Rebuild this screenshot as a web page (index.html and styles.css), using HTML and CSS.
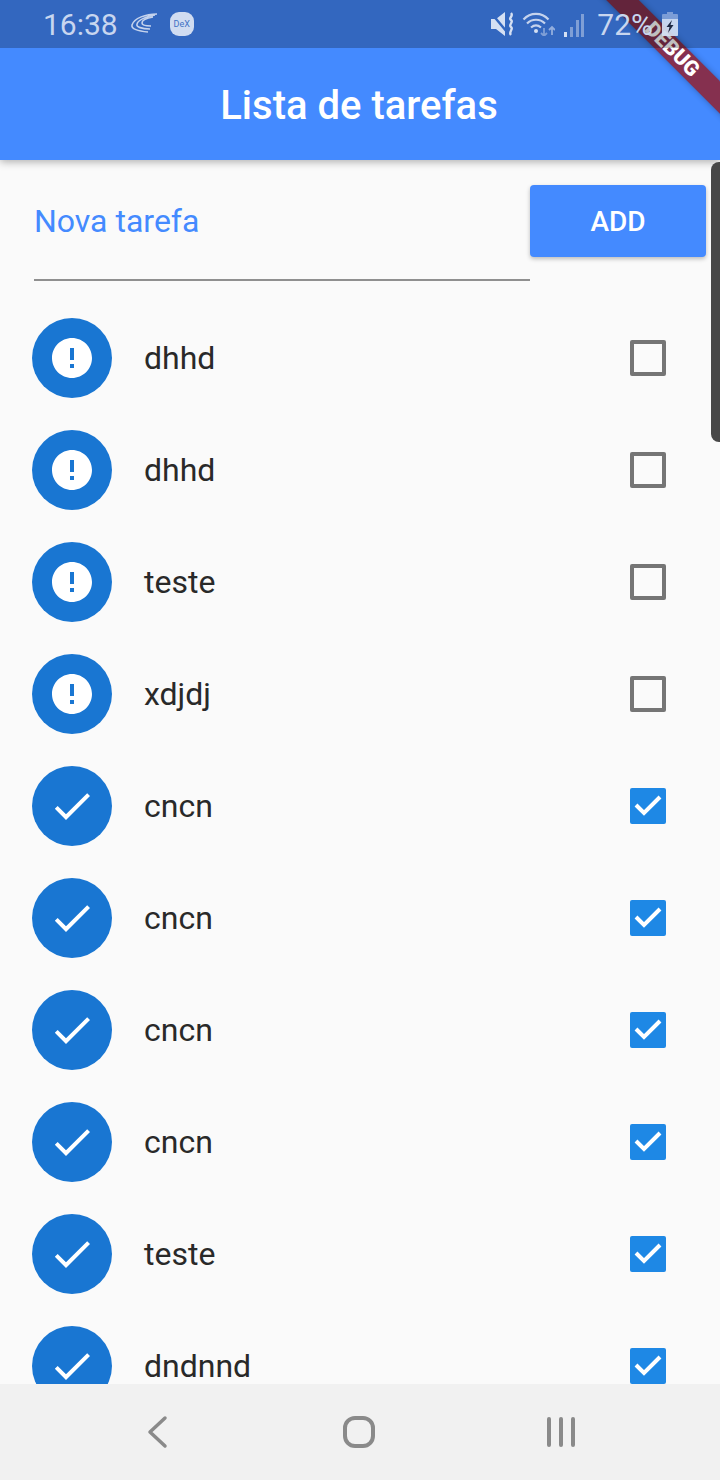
FILE: index.html
```html
<!DOCTYPE html>
<html lang="en">
<head>
    <meta charset="UTF-8">
    <meta name="viewport" content="width=device-width, initial-scale=1.0">
    <title>Lista de tarefas</title>
    <link rel="stylesheet" href="styles.css">
</head>
<body>
    <svg class="defs" width="0" height="0">
        <symbol id="error" viewBox="0 0 24 24">
            <path d="M12 2C6.48 2 2 6.48 2 12s4.48 10 10 10 10-4.48 10-10S17.52 2 12 2zm1 15h-2v-2h2v2zm0-4h-2V7h2v6z" fill="#fff"/>
        </symbol>
        <symbol id="check" viewBox="0 0 24 24">
            <path d="M9 16.17L4.83 12l-1.42 1.41L9 19 21 7l-1.41-1.41z" fill="#fff"/>
        </symbol>
        <symbol id="tick" viewBox="0 0 36 36">
            <path d="M6 17l8 8L30 9" fill="none" stroke="#fff" stroke-width="4"/>
        </symbol>
    </svg>

    <div class="page">
        <header class="appbar">Lista de tarefas</header>

        <div class="add-row">
            <div class="field">Nova tarefa</div>
            <button class="add-btn">ADD</button>
        </div>

        <div class="list">
            <div class="row">
                <span class="avatar"><svg width="48" height="48"><use href="#error"/></svg></span>
                <span class="row-text">dhhd</span>
                <span class="box"></span>
            </div>
            <div class="row">
                <span class="avatar"><svg width="48" height="48"><use href="#error"/></svg></span>
                <span class="row-text">dhhd</span>
                <span class="box"></span>
            </div>
            <div class="row">
                <span class="avatar"><svg width="48" height="48"><use href="#error"/></svg></span>
                <span class="row-text">teste</span>
                <span class="box"></span>
            </div>
            <div class="row">
                <span class="avatar"><svg width="48" height="48"><use href="#error"/></svg></span>
                <span class="row-text">xdjdj</span>
                <span class="box"></span>
            </div>
            <div class="row">
                <span class="avatar"><svg width="48" height="48"><use href="#check"/></svg></span>
                <span class="row-text">cncn</span>
                <span class="box done"><svg width="36" height="36"><use href="#tick"/></svg></span>
            </div>
            <div class="row">
                <span class="avatar"><svg width="48" height="48"><use href="#check"/></svg></span>
                <span class="row-text">cncn</span>
                <span class="box done"><svg width="36" height="36"><use href="#tick"/></svg></span>
            </div>
            <div class="row">
                <span class="avatar"><svg width="48" height="48"><use href="#check"/></svg></span>
                <span class="row-text">cncn</span>
                <span class="box done"><svg width="36" height="36"><use href="#tick"/></svg></span>
            </div>
            <div class="row">
                <span class="avatar"><svg width="48" height="48"><use href="#check"/></svg></span>
                <span class="row-text">cncn</span>
                <span class="box done"><svg width="36" height="36"><use href="#tick"/></svg></span>
            </div>
            <div class="row">
                <span class="avatar"><svg width="48" height="48"><use href="#check"/></svg></span>
                <span class="row-text">teste</span>
                <span class="box done"><svg width="36" height="36"><use href="#tick"/></svg></span>
            </div>
            <div class="row">
                <span class="avatar"><svg width="48" height="48"><use href="#check"/></svg></span>
                <span class="row-text">dndnnd</span>
                <span class="box done"><svg width="36" height="36"><use href="#tick"/></svg></span>
            </div>
        </div>

        <nav class="navbar">
            <svg width="24" height="34" viewBox="0 0 24 34">
                <path d="M19 3L4 17l15 14" fill="none" stroke="#8a8a8a" stroke-width="3.500" stroke-linecap="round" stroke-linejoin="round"/>
            </svg>
            <svg width="38" height="34" viewBox="0 0 38 34">
                <rect x="7" y="3" width="28" height="28" rx="10" fill="none" stroke="#8a8a8a" stroke-width="4"/>
            </svg>
            <svg width="34" height="34" viewBox="0 0 34 34">
                <path d="M5 4v26M17 4v26M29 4v26" fill="none" stroke="#8a8a8a" stroke-width="4" stroke-linecap="round"/>
            </svg>
        </nav>

        <div class="scrollbar"></div>
        <div class="banner">DEBUG</div>

        <div class="status">
            <span class="clock">16:38</span>
            <svg class="swoosh" width="28" height="24" viewBox="0 0 28 24">
                <path d="M27 2C16 2 4 6 2 13c-1 4 6 6 16 7M25 3C17 4 8 8 7 12c-1 3 5 5 13 5M23 5c-6 1-11 3-11 6 0 2 4 3 9 3" fill="none" stroke="#c5d3ed" stroke-width="1.6"/>
            </svg>
            <span class="dex">DeX</span>
            <span class="status-space"></span>
            <svg class="status-icon" width="26" height="26" viewBox="0 0 26 26">
                <path d="M1 8h5l9-7v24l-9-7H1z" fill="#d5e0f3"/>
                <path d="M2 3l15 18" stroke="#3367bf" stroke-width="2.5"/>
                <path d="M21 2c3 3-3 5 0 7s-3 5 0 7-3 5 0 8" fill="none" stroke="#d5e0f3" stroke-width="2.400"/>
            </svg>
            <svg class="status-icon wifi" width="34" height="24" viewBox="0 0 34 24">
                <path d="M2.500 7.500c7-7.500 18-7.500 25 0M6 11.500c5-5 13-5 18 0M10 15.500c3-2.500 7-2.500 10 0" fill="none" stroke="#c5d3ed" stroke-width="2.200"/>
                <circle cx="15" cy="19" r="2" fill="#d5e0f3"/>
                <path d="M23 16v8m-3-3l3 3 3-3" fill="none" stroke="#7f9fd6" stroke-width="1.800"/>
                <path d="M31 23v-8m-3 3l3-3 3 3" fill="none" stroke="#93aedd" stroke-width="1.800"/>
            </svg>
            <svg class="status-icon signal" width="24" height="26" viewBox="0 0 24 26">
                <rect x="2" y="21" width="3" height="5" fill="#d5e0f3"/>
                <rect x="8" y="16" width="3" height="10" fill="#7f9fd6"/>
                <rect x="14" y="9" width="3" height="17" fill="#7f9fd6"/>
                <rect x="19" y="3" width="3" height="23" fill="#7f9fd6"/>
            </svg>
            <span class="battery-text">72%</span>
            <svg class="battery" width="16" height="24" viewBox="0 0 16 24">
                <path d="M5 0h6v2h4a1 1 0 0 1 1 1v20a1 1 0 0 1-1 1H1a1 1 0 0 1-1-1V3a1 1 0 0 1 1-1h4z" fill="rgba(213, 224, 243, 0.45)"/>
                <path d="M0 7h16v16a1 1 0 0 1-1 1H1a1 1 0 0 1-1-1z" fill="rgba(213, 224, 243, 0.85)"/>
                <path d="M10 8L4.500 15h3L6 21l5.500-8H8.500z" fill="#1f2a44"/>
            </svg>
        </div>
    </div>
</body>
</html>
```

FILE: styles.css
```css
body{
    margin: 0;
    font-family: Roboto, "Liberation Sans", sans-serif;
    background-color: #fafafa;
}
.defs{
    position: absolute;
}
.page{
    position: relative;
    display: flex;
    flex-direction: column;
    height: 1480px;
    overflow: hidden;
}

/* status bar, drawn over the app bar and the banner */
.status{
    position: absolute;
    top: 0;
    left: 0;
    right: 0;
    z-index: 2;
    display: flex;
    align-items: center;
    height: 48px;
    padding: 0 42px 0 43px;
    background-color: rgba(0, 0, 0, 0.25);
    color: #c8d6ef;
}
.clock{
    font-size: 30px;
    margin-right: 12px;
}
.swoosh{
    margin-right: 12px;
}
.dex{
    display: flex;
    align-items: center;
    justify-content: center;
    width: 24px;
    height: 24px;
    border-radius: 9px;
    background-color: #d0dcf1;
    color: #3f72c4;
    font-size: 9px;
}
.status-space{
    flex: 1;
}
.status-icon{
    margin-right: 5px;
}
.wifi{
    margin-right: 7px;
}
.signal{
    margin-right: 11px;
}
.battery-text{
    font-size: 30px;
    margin-right: 9px;
}

/* app bar */
.appbar{
    position: relative;
    height: 160px;
    padding: 52px 2px 0 0;
    box-sizing: border-box;
    line-height: 108px;
    text-align: center;
    background-color: #448aff;
    color: #fff;
    font-size: 40px;
    font-weight: 500;
    box-shadow: 0 2px 8px rgba(0, 0, 0, 0.3);
    flex-shrink: 0;
}

/* input row */
.add-row{
    display: flex;
    align-items: flex-start;
    padding: 25px 14px 0 34px;
    flex-shrink: 0;
}
.field{
    flex: 1;
    height: 77px;
    padding-top: 17px;
    line-height: 38px;
    border-bottom: 2px solid #8f8f8f;
    color: #448aff;
    font-size: 32px;
}
.add-btn{
    width: 176px;
    height: 72px;
    border: none;
    border-radius: 4px;
    background-color: #448aff;
    color: #fff;
    font-family: inherit;
    font-size: 28px;
    font-weight: 500;
    box-shadow: 0 2px 4px rgba(0, 0, 0, 0.25);
}

/* task list */
.list{
    flex: 1;
    margin-top: 21px;
    overflow: hidden;
}
.row{
    display: flex;
    align-items: center;
    height: 112px;
    padding: 0 54px 0 32px;
}
.avatar{
    display: flex;
    align-items: center;
    justify-content: center;
    width: 80px;
    height: 80px;
    border-radius: 50%;
    background-color: #1976d2;
    margin-right: 32px;
}
.row-text{
    flex: 1;
    font-size: 32px;
    line-height: 38px;
    color: #292929;
}
.box{
    width: 36px;
    height: 36px;
    box-sizing: border-box;
    border: 4px solid #757575;
    border-radius: 2px;
}
.box.done{
    border: none;
    background-color: #1e88e5;
}
.box svg{
    display: block;
}

/* bottom nav */
.navbar{
    display: flex;
    align-items: center;
    height: 96px;
    padding-left: 146px;
    gap: 168px;
    background-color: #f1f1f1;
    flex-shrink: 0;
}

/* overlays */
.scrollbar{
    position: absolute;
    top: 162px;
    right: 0;
    width: 9px;
    height: 280px;
    background-color: #484848;
    border-radius: 8px 0 0 8px;
}
.banner{
    position: absolute;
    z-index: 1;
    top: 38px;
    left: 572px;
    width: 200px;
    height: 23px;
    line-height: 23px;
    text-align: center;
    transform: rotate(45deg);
    background-color: rgba(144, 32, 48, 0.85);
    color: #fff;
    font-size: 21px;
    font-weight: 900;
    box-shadow: 0 0 6px rgba(0, 0, 0, 0.3);
}
```
